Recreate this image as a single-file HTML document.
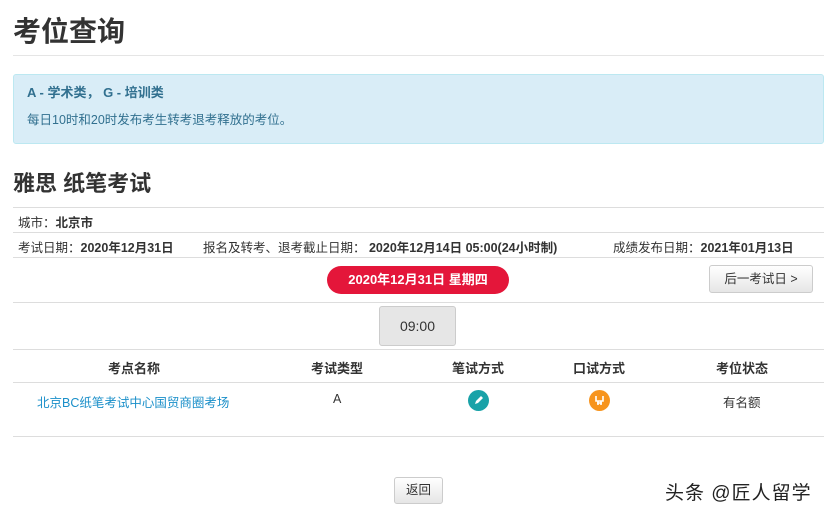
<!DOCTYPE html>
<html><head><meta charset="utf-8"><style>
*{margin:0;padding:0;box-sizing:border-box}
body{width:833px;height:515px;background:#fff;font-family:"Liberation Sans","Noto Sans CJK SC",sans-serif;color:#333;position:relative;overflow:hidden;font-size:12.5px}
.a{position:absolute;white-space:nowrap}
.hr{position:absolute;left:13px;width:811px;height:1px;background:#ddd}
b{font-weight:bold}
</style></head><body>
<div class="a" style="left:13px;top:10px;font-size:28px;font-weight:bold;color:#333">考位查询</div>
<div class="hr" style="top:55px;background:#e5e5e5"></div>
<div class="a" style="left:13px;top:74px;width:811px;height:70px;background:#d9edf7;border:1px solid #bce8f1;border-radius:3px"></div>
<div class="a" style="left:27px;top:82px;font-size:13px;font-weight:bold;color:#31708f">A - 学术类， G - 培训类</div>
<div class="a" style="left:27px;top:109px;font-size:12.5px;color:#31708f">每日10时和20时发布考生转考退考释放的考位。</div>
<div class="a" style="left:13px;top:166px;font-size:22px;font-weight:bold;color:#333">雅思 纸笔考试</div>
<div class="hr" style="top:207px"></div>
<div class="a" style="left:18px;top:212px">城市：<b>北京市</b></div>
<div class="hr" style="top:232px"></div>
<div class="a" style="left:18px;top:237px">考试日期：<b>2020年12月31日</b></div>
<div class="a" style="left:203px;top:237px">报名及转考、退考截止日期：&nbsp;<b>2020年12月14日 05:00(24小时制)</b></div>
<div class="a" style="left:613px;top:237px">成绩发布日期：<b>2021年01月13日</b></div>
<div class="hr" style="top:257px"></div>
<div class="a" style="left:327px;top:266px;width:182px;height:28px;background:#e4163a;border-radius:14px;color:#fff;font-weight:bold;font-size:13px;text-align:center;line-height:28px">2020年12月31日 星期四</div>
<div class="a" style="left:709px;top:265px;width:104px;height:28px;border:1px solid #ccc;border-radius:3px;background:linear-gradient(#fff,#e6e6e6);text-align:center;line-height:26px;font-size:12.5px">后一考试日 &gt;</div>
<div class="hr" style="top:302px"></div>
<div class="a" style="left:379px;top:306px;width:77px;height:40px;background:#e6e6e6;border:1px solid #ccc;border-radius:3px;text-align:center;line-height:38px;font-size:14px">09:00</div>
<div class="hr" style="top:349px"></div>
<div class="a" style="left:108px;top:358px;font-weight:bold;font-size:13px">考点名称</div>
<div class="a" style="left:311px;top:358px;font-weight:bold;font-size:13px">考试类型</div>
<div class="a" style="left:452px;top:358px;font-weight:bold;font-size:13px">笔试方式</div>
<div class="a" style="left:573px;top:358px;font-weight:bold;font-size:13px">口试方式</div>
<div class="a" style="left:716px;top:358px;font-weight:bold;font-size:13px">考位状态</div>
<div class="hr" style="top:382px"></div>
<div class="a" style="left:37px;top:392px;color:#1a8fc9">北京BC纸笔考试中心国贸商圈考场</div>
<div class="a" style="left:333px;top:392px">A</div>
<div class="a" style="left:468px;top:390px;width:21px;height:21px;border-radius:50%;background:#19a2a8"><svg width="21" height="21"><path d="M7 14l1-3 5-5 2 2-5 5z" fill="#fff"/></svg></div>
<div class="a" style="left:589px;top:390px;width:21px;height:21px;border-radius:50%;background:#f7941d"><svg width="21" height="21"><path d="M7 6v5h7V6M9 11v4M12 11v4M8 13h5" stroke="#fff" stroke-width="1.6" fill="none"/></svg></div>
<div class="a" style="left:723px;top:392px">有名额</div>
<div class="hr" style="top:436px"></div>
<div class="a" style="left:394px;top:477px;width:49px;height:27px;border:1px solid #ccc;border-radius:3px;background:linear-gradient(#fff,#e6e6e6);text-align:center;line-height:25px">返回</div>
<div class="a" style="left:665px;top:478px;font-size:19px;letter-spacing:1px;color:#222">头条 @匠人留学</div>
</body></html>
